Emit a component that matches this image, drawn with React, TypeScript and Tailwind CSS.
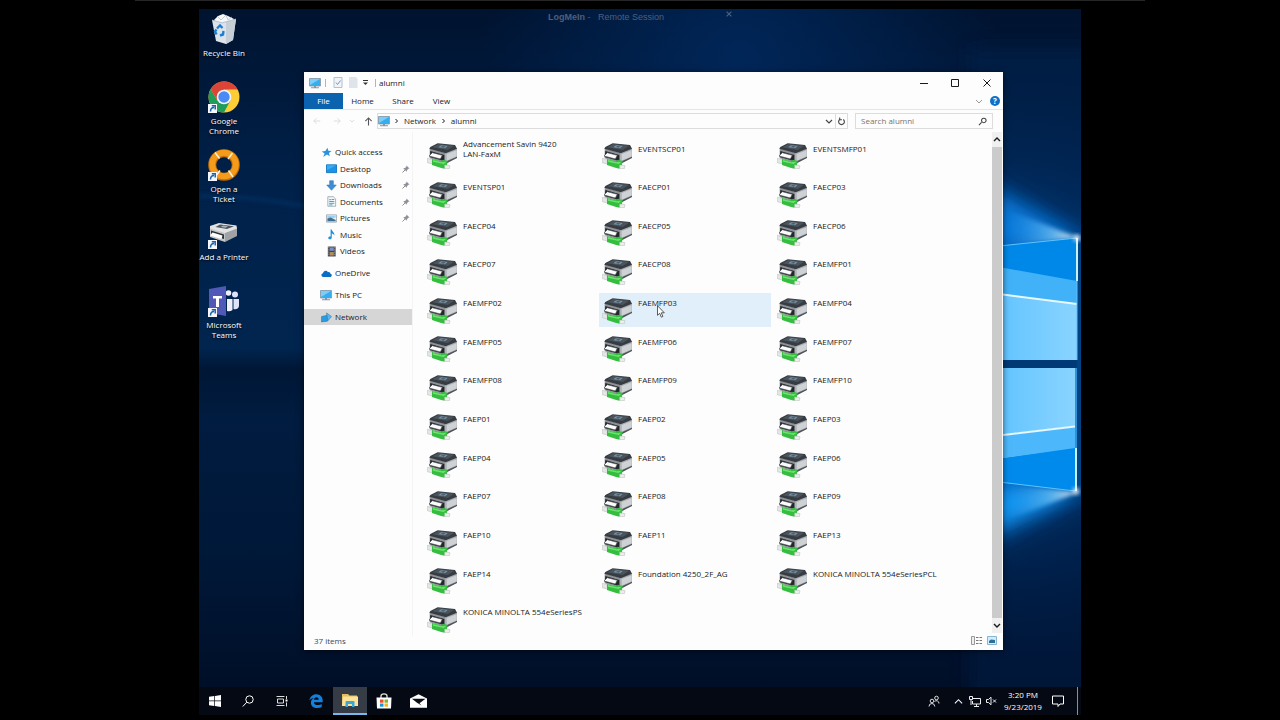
import type { ReactNode } from 'react';

const printers = [
  'Advancement Savin 9420 LAN-FaxM', 'EVENTSCP01', 'EVENTSMFP01',
  'EVENTSP01', 'FAECP01', 'FAECP03',
  'FAECP04', 'FAECP05', 'FAECP06',
  'FAECP07', 'FAECP08', 'FAEMFP01',
  'FAEMFP02', 'FAEMFP03', 'FAEMFP04',
  'FAEMFP05', 'FAEMFP06', 'FAEMFP07',
  'FAEMFP08', 'FAEMFP09', 'FAEMFP10',
  'FAEP01', 'FAEP02', 'FAEP03',
  'FAEP04', 'FAEP05', 'FAEP06',
  'FAEP07', 'FAEP08', 'FAEP09',
  'FAEP10', 'FAEP11', 'FAEP13',
  'FAEP14', 'Foundation 4250_2F_AG', 'KONICA MINOLTA 554eSeriesPCL',
  'KONICA MINOLTA 554eSeriesPS',
];

function NetworkPrinterIcon() {
  return (
    <svg viewBox="0 0 90 78" className="h-[26px] w-[30px] shrink-0" aria-hidden="true">
      <path d="M8 16 56 30 56 60 8 46Z" fill="#8e9297" />
      <path d="M56 28 90 16 90 44 56 62Z" fill="#a9adb1" />
      <path d="M59 33 89 22 89 40 59 53Z" fill="#cfd2d5" />
      <path d="M56 56 90 41 90 45 56 62Z" fill="#4d5258" />
      <path d="M32 1 84 6 90 17 56 31 7 17 10 12Z" fill="#363c42" />
      <path d="M34 3 82 8 62 21 16 13Z" fill="#4b535b" />
      <path d="M42 7 62 9 54 16 34 13Z" fill="#7d95a6" />
      <path d="M46 9 56 10 51 14 41 12Z" fill="#43617a" />
      <path d="M10 24 52 36 52 54 8 42Z" fill="#23272b" />
      <path d="M16 29 46 37 40 48 6 39Z" fill="#fbfbfb" stroke="#4a4f54" strokeWidth="2" />
      <path d="M1 46 16 50 16 63 1 59Z" fill="#e3e8e4" stroke="#b3bab5" strokeWidth="1.500" />
      <path d="M15 48 42 55 48 50 62 54 60 66 52 77 40 74 15 66Z" fill="#35bd40" />
      <path d="M18 51 44 58 58 56 50 63 18 56Z" fill="#6fe272" />
      <path d="M53 66 69 68 67 77 53 77Z" fill="#eceeec" stroke="#b3bab5" strokeWidth="1.500" />
    </svg>
  );
}

function Shortcut() {
  return (
    <g>
      <path d="M0 23h9v9H0z" fill="#f4f7fb" />
      <path d="M2.500 30.500c0-2.600 1-4 3.500-4M3.800 24.800H7.200V28.400" fill="none" stroke="#1d5fa8" strokeWidth="1.500" />
    </g>
  );
}

const RecycleIcon = () => (
  <svg viewBox="0 0 32 32" className="size-8" aria-hidden="true">
    <path d="M6 7 10 3 15 1 20 3 26 6 24 9 8 9Z" fill="#f6f8fa" />
    <path d="M4 7 14 9 28 6 25 27 18 31 8 28Z" fill="#dde3ea" />
    <path d="M18 9 28 6 25 27 18 31Z" fill="#c6ced7" />
    <path d="M4 7 14 10 28 6M9 3 13 7 18 2 20 7 24 4" fill="none" stroke="#aab4c0" strokeWidth=".7" />
    <path d="M9 15.500 12 12.500 14.500 15M15.500 18 15 21.500 12 22.500M8.500 21.500 7 18.500 8.500 16.500" fill="none" stroke="#1b7ed3" strokeWidth="2.400" />
  </svg>
);

const ChromeIcon = () => (
  <svg viewBox="0 0 32 32" className="size-8" aria-hidden="true">
    <circle cx="16" cy="16" r="15.500" fill="#fccd35" />
    <path d="M2.600 8.300 9.600 19.800 22.400 19.500 16 31.500A15.500 15.500 0 0 1 2.600 8.300Z" fill="#219d5a" />
    <path d="M2.600 8.300A15.500 15.500 0 0 1 29.700 8.500H16L9.600 19.800Z" fill="#dc4437" />
    <circle cx="16" cy="16" r="7.300" fill="#f4f7fb" />
    <circle cx="16" cy="16" r="5.700" fill="#4a8af4" />
    <Shortcut />
  </svg>
);

const TicketIcon = () => (
  <svg viewBox="0 0 32 32" className="size-8" aria-hidden="true">
    <circle cx="16" cy="16" r="11.800" fill="none" stroke="#c56d08" strokeWidth="8" />
    <circle cx="16" cy="15.500" r="11.800" fill="none" stroke="#f49b1b" strokeWidth="6" />
    <path d="M7 3.500 11.500 9.500M24.500 4 20 10M25 28 20.500 21.500M7.500 27.500 12 21.500" stroke="#fdf1dd" strokeWidth="1.500" />
    <Shortcut />
  </svg>
);

const AddPrinterIcon = () => (
  <svg viewBox="0 0 32 32" className="size-8" aria-hidden="true">
    <path d="M2 10 17 15 17 25 2 20Z" fill="#c4c6c8" />
    <path d="M17 15 29 10.500 29 19 17 25Z" fill="#a0a3a6" />
    <path d="M2 9 11 6 28.500 8.500 29 11.500 17 16 2 11.500Z" fill="#e2e3e4" />
    <path d="M12 7.500 26 9.200 19 12 7.500 10Z" fill="#4d545a" />
    <path d="M15 8.500 20 9.200 17.500 10.800 12.500 10Z" fill="#a8b5be" />
    <path d="M3 13.500 16 17.500 16 22 3 18Z" fill="#2b2f33" />
    <path d="M4.500 15.500 14.500 18.500 13.500 22 2 18.500Z" fill="#fff" />
    <Shortcut />
  </svg>
);

const TeamsIcon = () => (
  <svg viewBox="0 0 32 32" className="size-8" aria-hidden="true">
    <circle cx="20.500" cy="8" r="2.800" fill="#eef0fb" />
    <circle cx="27" cy="9.500" r="3" fill="#dfe2fb" />
    <path d="M19 14H24.500V25Q22 27 19 26Z" fill="#eef0fb" />
    <path d="M25.500 14H31V21Q30 25 25.500 24Z" fill="#dfe2fb" />
    <path d="M1 4 18 1V31L1 28Z" fill="#5059b5" />
    <path d="M5 11H14V13.600H11V22H8V13.600H5Z" fill="#fff" />
    <Shortcut />
  </svg>
);

const desktopItems: { label: string; icon: ReactNode; wrap: string }[] = [
  { label: 'Recycle Bin', icon: <RecycleIcon />, wrap: 'whitespace-nowrap' },
  { label: 'Google Chrome', icon: <ChromeIcon />, wrap: 'w-10' },
  { label: 'Open a Ticket', icon: <TicketIcon />, wrap: 'w-8' },
  { label: 'Add a Printer', icon: <AddPrinterIcon />, wrap: 'whitespace-nowrap' },
  { label: 'Microsoft Teams', icon: <TeamsIcon />, wrap: 'w-10' },
];

function Wallpaper() {
  return (
    <svg viewBox="0 0 882 706" preserveAspectRatio="none" className="absolute inset-0 h-full w-full" aria-hidden="true">
      <defs>
        <linearGradient id="base" x1="0" y1="0" x2="0" y2="1">
          <stop offset="0" stopColor="#00132f" />
          <stop offset=".25" stopColor="#00214a" />
          <stop offset=".48" stopColor="#00254f" />
          <stop offset=".51" stopColor="#001736" />
          <stop offset=".58" stopColor="#001c40" />
          <stop offset=".78" stopColor="#001838" />
          <stop offset="1" stopColor="#000d24" />
        </linearGradient>
        <radialGradient id="glow" gradientUnits="userSpaceOnUse" cx="800" cy="355" r="290">
          <stop offset="0" stopColor="#0078dc" />
          <stop offset=".4" stopColor="#0066c4" stopOpacity=".9" />
          <stop offset=".7" stopColor="#003c7c" stopOpacity=".5" />
          <stop offset="1" stopColor="#002450" stopOpacity="0" />
        </radialGradient>
        <radialGradient id="top" gradientUnits="userSpaceOnUse" cx="540" cy="50" r="260">
          <stop offset="0" stopColor="#00285c" stopOpacity=".9" />
          <stop offset="1" stopColor="#00285c" stopOpacity="0" />
        </radialGradient>
        <linearGradient id="ray" gradientUnits="userSpaceOnUse" x1="810" y1="0" x2="880" y2="0">
          <stop offset="0" stopColor="#3fb0ff" stopOpacity="0" />
          <stop offset=".6" stopColor="#7fd0ff" stopOpacity=".7" />
          <stop offset="1" stopColor="#fff" />
        </linearGradient>
        <linearGradient id="pane" x1="0" y1="0" x2="1" y2="0">
          <stop offset="0" stopColor="#62c4ff" />
          <stop offset="1" stopColor="#8ad4ff" />
        </linearGradient>
        <filter id="soft" x="-50%" y="-50%" width="200%" height="200%"><feGaussianBlur stdDeviation="9" /></filter>
        <filter id="fine" x="-50%" y="-50%" width="200%" height="200%"><feGaussianBlur stdDeviation="2" /></filter>
      </defs>
      <path d="M0 0H882V706H0Z" fill="url(#base)" />
      <path d="M0 0H882V706H0Z" fill="url(#top)" />
      <path d="M0 187Q60 188 110 198" fill="none" stroke="#0a4a86" strokeWidth="2" opacity=".6" filter="url(#fine)" />
      <path d="M500 60H882V660H500Z" fill="url(#glow)" />
      <path d="M770 40H930V240L878 218 770 150Z" fill="#00214e" opacity=".6" filter="url(#soft)" />
      <path d="M770 690H930V470L878 494 770 560Z" fill="#001c44" opacity=".6" filter="url(#soft)" />
      <path d="M740 150 879 229 740 245Z" fill="#0a84e8" opacity=".8" filter="url(#soft)" />
      <path d="M740 550 879 483 740 470Z" fill="#18a0ff" opacity=".85" filter="url(#soft)" />
      <path d="M780 190 880 229 780 240ZM780 522 880 483 780 474Z" fill="url(#ray)" opacity=".9" filter="url(#fine)" />
      <path d="M800 237 878 229V351H800Z" fill="#0088e8" />
      <path d="M800 258 878 272V351H800Z" fill="#41b1f8" />
      <path d="M800 285 878 295V351H800Z" fill="url(#pane)" />
      <path d="M800 359H876V417L800 426Z" fill="url(#pane)" />
      <path d="M800 427 876 418V440L800 450Z" fill="#4cb8fb" />
      <path d="M800 285 878 295M800 426.500 876 417.500" stroke="#e8f8ff" strokeWidth="2" />
      <path d="M800 450 876 439V482L800 473Z" fill="#008aec" />
      <path d="M800 237 878 229M800 473 876 482" stroke="#5cc4ff" strokeWidth="1" />
      <path d="M800 351H882V359H800Z" fill="#003a76" />
      <path d="M878 232H882V482H878Z" fill="#004484" />
      <path d="M878 229V272M877 439V482" stroke="#c9f0ff" strokeWidth="2" />
      <path d="M878 272V351M877 359V439" stroke="#62bdf5" strokeWidth="1" />
      <circle cx="878" cy="229" r="3" fill="#fff" filter="url(#fine)" />
      <circle cx="877" cy="482" r="3" fill="#fff" filter="url(#fine)" />
    </svg>
  );
}

function MonitorIcon() {
  return (
    <svg viewBox="0 0 12 12" className="size-3 shrink-0" aria-hidden="true">
      <path d="M.5 1.500H11.500V9H.5Z" fill="#35aef0" stroke="#8797a5" strokeWidth=".8" />
      <path d="M1 2H11L1 8Z" fill="#7ccdf7" />
      <path d="M5 9H7V10.500H5ZM2 10.300H10V11.200H2Z" fill="#7f97a8" />
    </svg>
  );
}

const sideIcons: Record<string, ReactNode> = {
  'Quick access': <path d="M7 .8 8 4 11.500 4.300 8.700 6.600 9.600 10 6.500 8.300 2.300 11 4 7.200.8 5 4.800 4.400Z" fill="#2b93dc" />,
  Desktop: (
    <>
      <path d="M.5 2H11.500V10.500H.5Z" fill="#1a94e6" stroke="#1173bd" />
      <path d="M1 2.500H11L1 8Z" fill="#36aef5" />
    </>
  ),
  Downloads: <path d="M4 .8H8V5.500H11.200L6 11.200.8 5.500H4Z" fill="#3d8ed6" stroke="#2a71b3" strokeWidth=".6" />,
  Documents: (
    <>
      <path d="M2 .8H8L10.500 3.200V11.200H2Z" fill="#f4f8fa" stroke="#8799a5" strokeWidth=".8" />
      <path d="M3.500 4H6M3.500 6H9M3.500 8H9M6.500 3.800H9M3.500 9.700H7" stroke="#3f9bcb" />
    </>
  ),
  Pictures: (
    <>
      <path d="M.6 2H11.400V10H.6Z" fill="#e9f2f7" stroke="#8e9ba5" strokeWidth=".8" />
      <path d="M1.500 3H10.500V5L5 6.500 1.500 5.500Z" fill="#9fd0ee" />
      <path d="M1.500 6 5 5 10.500 7.500V9H1.500Z" fill="#3c6f93" />
    </>
  ),
  Music: <path d="M5 .6H6.300C6.500 3.200 9.800 3.500 9 7.200 8.500 5.500 7.500 5 6.300 4.900V9.200C6.300 12 2.200 11.800 2.500 9.600 2.700 8.200 4 7.900 5 8.200Z" fill="#1e8fe0" />,
  Videos: (
    <>
      <path d="M2 .6H10.500V11.400H2Z" fill="#3d3f46" />
      <path d="M4 1.500H8.500V5.300H4Z" fill="#7a8fc4" />
      <path d="M4 6.500H8.500V10.500H4Z" fill="#b28d59" />
      <path d="M3 1V11M9.500 1V11" stroke="#c9ccd3" strokeWidth=".8" strokeDasharray="1 1" />
    </>
  ),
  OneDrive: <path d="M2.500 9.800C-.2 9.500-.2 6.200 2.200 5.800 2.500 3.200 6 2 7.500 4.500 9.300 4 10.300 5.200 10.300 6.300 12.300 6.500 12.200 9.700 10.200 9.800Z" fill="#0a6fc2" />,
  Network: (
    <>
      <path d="M.5 5 7 3.500V10L.5 10.800Z" fill="#2d9be0" stroke="#2873a8" strokeWidth=".6" />
      <path d="M6 1 11.500 5 7.500 9.500Z" fill="#59b6ee" stroke="#2873a8" strokeWidth=".6" />
    </>
  ),
};

const quick = [
  { name: 'Quick access', pad: 'pl-[17px]', pin: false },
  { name: 'Desktop', pad: 'pl-[22px]', pin: true },
  { name: 'Downloads', pad: 'pl-[22px]', pin: true },
  { name: 'Documents', pad: 'pl-[22px]', pin: true },
  { name: 'Pictures', pad: 'pl-[22px]', pin: true },
  { name: 'Music', pad: 'pl-[22px]', pin: false },
  { name: 'Videos', pad: 'pl-[22px]', pin: false },
];

function SideLink({ name, pad, pin }: { name: string; pad: string; pin?: boolean }) {
  const active = name === 'Network' ? 'bg-[#d6d6d6]' : '';
  return (
    <a href="#" className={`flex h-4 items-center gap-[3px] pr-0.5 ${pad} ${active}`}>
      {name === 'This PC' ? (
        <MonitorIcon />
      ) : (
        <svg viewBox="0 0 12 12" className="size-[11px] shrink-0" aria-hidden="true">{sideIcons[name]}</svg>
      )}
      <span className="flex-1">{name}</span>
      {pin && (
        <svg viewBox="0 0 8 8" className="size-2" aria-hidden="true">
          <path d="M4.500.5 7.500 3.500 6.300 3.800 5 5.200 4.700 6.800 1.200 3.300 3 3 4.300 1.700Z" fill="#8b9197" />
          <path d="M.5 7.500 3 5" stroke="#8b9197" />
        </svg>
      )}
    </a>
  );
}

function Stroke({ d, className, box = '0 0 10 10', width = 1 }: { d: string; className: string; box?: string; width?: number }) {
  return (
    <svg viewBox={box} className={`shrink-0 ${className}`} fill="none" stroke="currentColor" strokeWidth={width} aria-hidden="true">
      <path d={d} />
    </svg>
  );
}

function Explorer() {
  return (
    <section className="mt-[63px] mr-[78px] mb-[37px] flex min-w-0 flex-1 flex-col bg-[#fdfdfd] text-[#1a1a1a] shadow-[0_1px_6px_rgba(0,0,0,0.6)]">
      <header className="flex h-[21px] shrink-0 items-center pl-[5px]">
        <MonitorIcon />
        <span className="ml-1 h-2 w-px bg-[#b5b5b5]" />
        <button aria-label="Properties" className="ml-[7px]">
          <svg viewBox="0 0 10 11" className="h-[11px] w-2.5">
            <path d="M1 .5H9V10.500H1Z" fill="#f0f4f9" stroke="#b4bfd0" />
            <path d="M3 5.500 4.500 7.500 7.500 3.500" fill="none" stroke="#7f93b8" />
          </svg>
        </button>
        <button aria-label="New folder" className="ml-[5px]">
          <svg viewBox="0 0 10 11" className="h-[11px] w-2.5"><path d="M1 0H8L9.500 2V11H1Z" fill="#dfe3ea" /></svg>
        </button>
        <button aria-label="Customize toolbar" className="ml-1">
          <svg viewBox="0 0 7 7" className="size-[7px]"><path d="M1 1.500H6" stroke="#333" /><path d="M1 3.500H6L3.500 6Z" fill="#333" /></svg>
        </button>
        <span className="ml-1.5 h-2 w-px bg-[#b5b5b5]" />
        <h1 className="ml-[3px] flex-1">alumni</h1>
        <button aria-label="Minimize" className="flex h-full w-[31px] items-center justify-center"><Stroke d="M1 5.500H9" className="size-2.5" /></button>
        <button aria-label="Maximize" className="flex h-full w-[31px] items-center justify-center"><Stroke d="M1.500 1.500H8.500V8.500H1.500Z" className="size-2.5" /></button>
        <button aria-label="Close" className="flex h-full w-[33px] items-center justify-center"><Stroke d="M1.500 1.500 8.500 8.500M8.500 1.500 1.500 8.500" className="size-2.5" /></button>
      </header>
      <nav className="flex h-[17px] shrink-0 items-center border-b border-[#e3e5e8]">
        <button className="h-full w-[39px] bg-[#0b63b0] text-white">File</button>
        <button className="w-[39px]">Home</button>
        <button className="w-[42px]">Share</button>
        <button className="w-[35px]">View</button>
        <span className="flex-1" />
        <button aria-label="Expand ribbon" className="mr-[7px] text-[#999]"><Stroke d="M1 2 4 5 7 2" box="0 0 8 7" className="h-[7px] w-2" /></button>
        <button aria-label="Help" className="mr-[3px] flex size-2.5 items-center justify-center rounded-full bg-[#0d72c7] font-bold text-white">?</button>
      </nav>
      <div className="flex h-[22px] shrink-0 items-center">
        <button aria-label="Back" className="ml-[9px] text-[#d6d6d6]"><Stroke d="M9 5H1M4.500 1.500 1 5 4.500 8.500" className="size-2" /></button>
        <button aria-label="Forward" className="ml-3 text-[#d6d6d6]"><Stroke d="M1 5H9M5.500 1.500 9 5 5.500 8.500" className="size-2" /></button>
        <button aria-label="Recent locations" className="ml-2 text-[#dcdcdc]"><Stroke d="M1 2 3 4 5 2" box="0 0 6 6" className="size-1.5" /></button>
        <button aria-label="Up" className="ml-[9px] text-[#555]"><Stroke d="M5 9.500V1M1.500 4.500 5 1 8.500 4.500" className="size-[9px]" width={1.2} /></button>
        <div className="ml-1 flex h-4 flex-1 items-center border border-[#dcdcdc]">
          <MonitorIcon />
          <Stroke d="M1.500 1 3.500 3 1.500 5" box="0 0 6 6" className="ml-1 size-1.5" />
          <a href="#" className="ml-1">Network</a>
          <Stroke d="M1.500 1 3.500 3 1.500 5" box="0 0 6 6" className="ml-[5px] size-1.5" />
          <a href="#" className="ml-1 flex-1">alumni</a>
          <button aria-label="Previous locations" className="mr-0.5 text-[#444]"><Stroke d="M1 2 4 5 7 2" box="0 0 8 7" className="h-[7px] w-2" width={1.2} /></button>
          <button aria-label="Refresh" className="flex h-full w-3 items-center justify-center border-l border-[#dcdcdc] text-[#444]">
            <Stroke d="M7 2.800A3.200 3.200 0 1 1 3 2.800M3 .5V3H5.500" className="size-[9px]" width={1.2} />
          </button>
        </div>
        <label className="mr-2.5 ml-[7px] flex h-4 w-[138px] items-center border border-[#dcdcdc] px-[5px]">
          <input aria-label="Search alumni" placeholder="Search alumni" className="min-w-0 flex-1 bg-transparent outline-none placeholder:text-[#737373]" />
          <Stroke d="M4 6 1 9M6.500 1.300A2.500 2.500 0 1 1 6.400 1.300Z" className="size-[9px] text-[#444]" width={1.2} />
        </label>
      </div>
      <div className="flex flex-1">
        <nav className="w-[109px] shrink-0 border-r border-[#f4f4f4] pt-[12px]">
          <div className="flex h-[115px] flex-col justify-between">
            {quick.map((q) => <SideLink key={q.name} {...q} />)}
          </div>
          <div className="mt-1.5 flex flex-col gap-1.5">
            <SideLink name="OneDrive" pad="pl-[17px]" />
            <SideLink name="This PC" pad="pl-4" />
            <SideLink name="Network" pad="pl-[17px]" />
          </div>
        </nav>
        <ul className="grid flex-1 grid-cols-3 content-between gap-x-[3px] pt-[6px] pr-[46px] pl-[11px]">
          {printers.map((name) => (
            <li key={name} className={`relative flex h-[34px] gap-[6px] pl-[3px] ${name === 'FAEMFP03' ? 'bg-[#e1effa]' : ''}`}>
              <div className="pt-[5px]"><NetworkPrinterIcon /></div>
              <div className="flex h-[21px] items-center"><span className={name.startsWith('Adv') ? 'w-[100px]' : 'whitespace-nowrap'}>{name}</span></div>
              {name === 'FAEMFP03' && (
                <svg viewBox="0 0 8 13" className="absolute top-3 left-[58px] h-[13px] w-2" aria-hidden="true">
                  <path d="M.5.700V10.300L2.700 8.300 4.300 12.200 5.900 11.500 4.300 7.800H7.300Z" fill="#fff" stroke="#333" strokeWidth=".8" />
                </svg>
              )}
            </li>
          ))}
        </ul>
        <div className="mr-px mb-[3px] flex w-2.5 flex-col items-center bg-[#f0f0f0]">
          <button aria-label="Scroll up" className="flex h-[15px] items-center"><Stroke d="M1 5 4 2 7 5" box="0 0 8 7" width={1.4} className="h-[7px] w-2" /></button>
          <div className="w-full flex-1 bg-[#cbcbcb]" />
          <button aria-label="Scroll down" className="flex h-[15px] items-center"><Stroke d="M1 2 4 5 7 2" box="0 0 8 7" width={1.4} className="h-[7px] w-2" /></button>
        </div>
      </div>
      <footer className="flex h-3.5 shrink-0 items-start justify-between pr-1.5 pl-2.5 text-[#35465c]">
        <span>37 items</span>
        <span className="flex gap-1">
          <button aria-label="Details view">
            <svg viewBox="0 0 12 9" className="h-[9px] w-3">
              <path d="M.5.500H3.500V8.500H.5Z" fill="#eee" stroke="#999" />
              <path d="M5 1.500H11M5 4.500H11M5 7.500H11" stroke="#777" strokeDasharray="2.500 1" />
            </svg>
          </button>
          <button aria-label="Tiles view">
            <svg viewBox="0 0 10 9" className="h-[9px] w-2.5">
              <path d="M.5.500H9.500V8.500H.5Z" fill="#d3ecfa" stroke="#84b7d6" />
              <path d="M2 5 4 3.500 8 4V7H2Z" fill="#2f6f97" />
            </svg>
          </button>
        </span>
      </footer>
    </section>
  );
}

function TaskButton({ label, className, children }: { label: string; className: string; children: ReactNode }) {
  return <button aria-label={label} className={`flex h-full items-center justify-center ${className}`}>{children}</button>;
}

function Taskbar() {
  return (
    <footer className="relative flex h-7 shrink-0 items-center bg-[#050914] text-white">
      <TaskButton label="Start" className="w-8">
        <svg viewBox="0 0 12 12" className="size-3"><path d="M0 1.700 5.300 1V5.600H0ZM6 .9 12 0V5.600H6ZM0 6.300H5.300V11L0 10.300ZM6 6.300H12V12L6 11.100Z" fill="#fff" /></svg>
      </TaskButton>
      <TaskButton label="Search" className="w-[34px]">
        <svg viewBox="0 0 12 12" className="size-3" fill="none" stroke="#fff"><circle cx="7.500" cy="4.500" r="3.700" /><path d="M4.800 7.200.8 11.500" /></svg>
      </TaskButton>
      <TaskButton label="Task view" className="w-[34px]">
        <svg viewBox="0 0 12 12" className="size-3" fill="none" stroke="#ddd"><path d="M1.500 4H7.500V8H1.500ZM.5 1.500H8.500M.5 10.500H8.500M10.500 1V4M10.500 7.500V11.500" /><path d="M9.500 4.500H11.500V6.500H9.500Z" fill="#fff" stroke="none" /></svg>
      </TaskButton>
      <TaskButton label="Microsoft Edge" className="w-[34px]">
        <svg viewBox="0 0 14 14" className="size-3.5"><path d="M.3 6.500C1 2.500 3.800.2 7.300.2 11.300.2 13.700 3.100 13.700 6.600V8.300H4.900C5.100 10.300 6.700 11.100 8.700 11.100 10.300 11.100 11.700 10.700 12.700 10V12.900C11.500 13.600 10 13.900 8.300 13.900 4.600 13.900 2 12 1.900 8.900 1.800 6.500 3.200 4.700 5 3.900 2.900 4.100 1.400 5 .3 6.500ZM5 5.800H9.700C9.700 4.300 8.900 3.300 7.500 3.300 6.100 3.300 5.200 4.300 5 5.800Z" fill="#1380dc" /></svg>
      </TaskButton>
      <TaskButton label="File Explorer" className="w-[34px] border-b-2 border-[#76b9ed] bg-[#363c45]">
        <svg viewBox="0 0 16 14" className="h-3.5 w-4">
          <path d="M0 1H6L7.500 2.500H15V13H0Z" fill="#e5bd5c" /><path d="M1 3.500H16V13H0Z" fill="#fbe49a" />
          <path d="M3.500 14V9Q3.500 8 4.500 8H11.500Q12.500 8 12.500 9V14H10V11H6V14Z" fill="#3ba7d8" />
        </svg>
      </TaskButton>
      <TaskButton label="Microsoft Store" className="w-[34px]">
        <svg viewBox="0 0 16 16" className="size-4">
          <path d="M5 5V3Q5 .800 8 .800 11 .800 11 3V5" fill="none" stroke="#ddd" strokeWidth="1.300" />
          <path d="M.5 4.500H15.500L15 15.500H1Z" fill="#fff" />
          <path d="M4 6.500H7.500V9.700H4Z" fill="#e8502b" /><path d="M8.500 6.500H12V9.700H8.500Z" fill="#7db62c" />
          <path d="M4 10.500H7.500V13.700H4Z" fill="#1897d8" /><path d="M8.500 10.500H12V13.700H8.500Z" fill="#f7b51c" />
        </svg>
      </TaskButton>
      <TaskButton label="Mail" className="w-[34px]">
        <svg viewBox="0 0 17 14" className="h-3.5 w-[17px]"><path d="M0 4.500 8.500.2 17 4.500V13.800H0Z" fill="#fff" /><path d="M2 4.800H15.500L9.500 9.200 11.500 11.500 7 8.700Z" fill="#0a0d16" /></svg>
      </TaskButton>
      <span className="flex-1" />
      <button aria-label="People">
        <svg viewBox="0 0 12 12" className="size-3" fill="none" stroke="#ddd"><circle cx="4" cy="6" r="1.800" /><circle cx="8.500" cy="3" r="1.800" /><path d="M1 11.500Q1 8.500 4 8.500 6.500 8.500 6.800 11.500M6.500 6.500Q8 5 9.500 6 11 6.500 11 8.500" /></svg>
      </button>
      <button aria-label="Show hidden icons" className="ml-3.5"><Stroke d="M1 7 5 3 9 7" className="size-[9px]" width={1.2} /></button>
      <button aria-label="Network" className="ml-1.5">
        <svg viewBox="0 0 12 11" className="h-[11px] w-3" fill="none" stroke="#eee"><path d="M4 2.500H11.500V8H3.500V5M7.500 8V10.500M5 10.500H10M.500.500H3.500V3.500H.500ZM2 3.500V9" /></svg>
      </button>
      <button aria-label="Muted" className="ml-[5px]">
        <svg viewBox="0 0 11 10" className="h-2.5 w-[11px]" fill="none" stroke="#eee"><path d="M.500 3.500H2.500L5 1.200V8.800L2.500 6.500H.500ZM7 3.500 10 6.500M10 3.500 7 6.500" /></svg>
      </button>
      <time className="ml-0.5 w-12 text-center leading-3">3:20 PM<br />9/23/2019</time>
      <button aria-label="Notifications" className="ml-[5px]"><Stroke d="M.500 1H11.500V9H8L6 11.500V9H.500Z" box="0 0 12 12" className="size-3" /></button>
      <span className="mr-[3px] ml-[13px] h-full w-px bg-[#8a8f98]" />
    </footer>
  );
}

export default function App() {
  return (
    <div className="flex min-h-screen flex-col bg-black pb-[5px] font-['Open_Sans',sans-serif] text-[8px] leading-[10px]">
      <div className="mx-[135px] h-px bg-[#262626]" />
      <main className="relative mx-[199px] mt-2 flex flex-1 flex-col">
        <Wallpaper />
        <div className="absolute top-0 right-[348px] left-[349px] flex font-['Liberation_Sans',sans-serif] text-[9px] text-[#4d5f7a]">
          <p className="pt-[3px]"><b>LogMeIn</b> -&nbsp;&nbsp; Remote Session</p>
          <button aria-label="Close session bar" className="ml-auto flex h-2.5 items-center"><Stroke d="M2 2 8 8M8 2 2 8" width={1.5} className="size-2" /></button>
        </div>
        <div className="relative flex flex-1">
          <ul className="flex w-[105px] shrink-0 flex-col gap-3 pt-1">
            {desktopItems.map(({ label, icon, wrap }) => (
              <li key={label} className="flex h-14 w-[50px] flex-col items-center gap-[3px] text-center text-white [text-shadow:0_1px_2px_#000]">
                {icon}
                <a href="#" className={wrap}>{label}</a>
              </li>
            ))}
          </ul>
          <Explorer />
        </div>
        <Taskbar />
      </main>
    </div>
  );
}
